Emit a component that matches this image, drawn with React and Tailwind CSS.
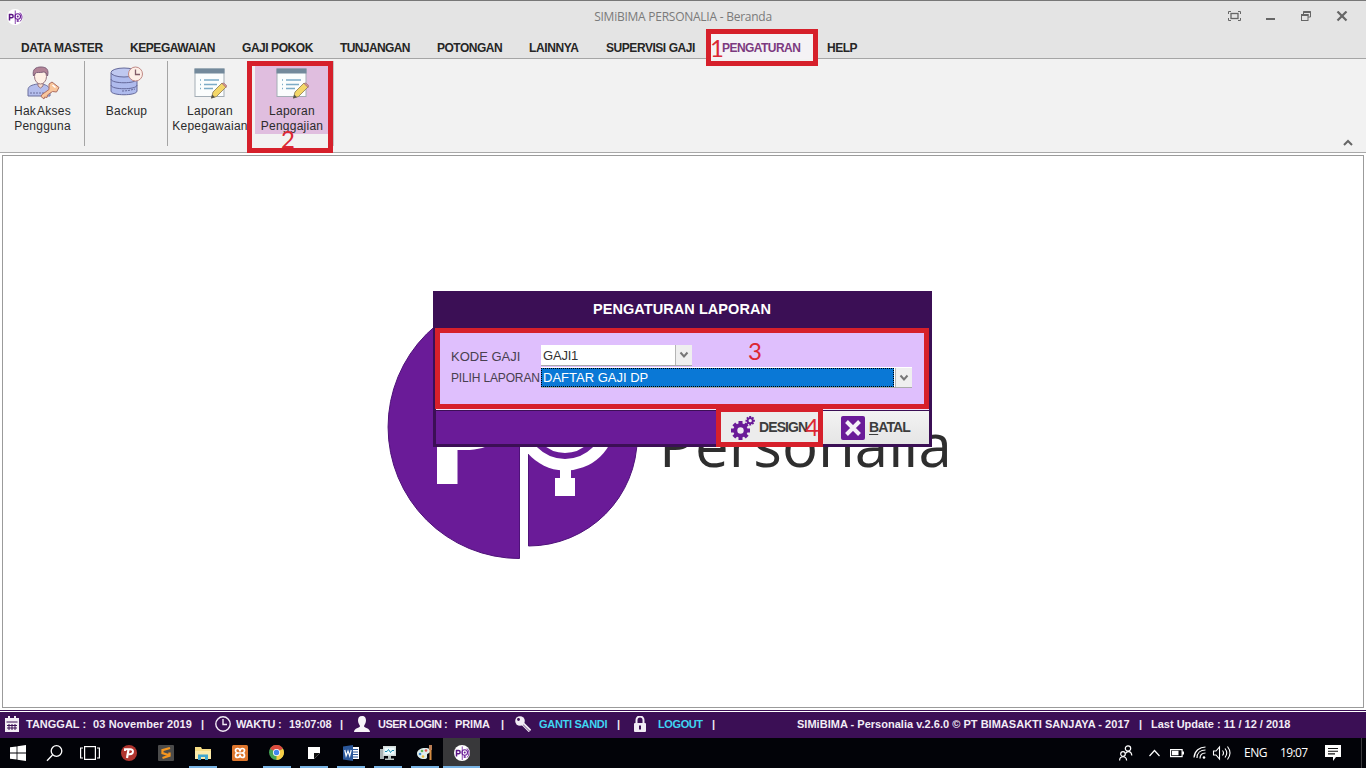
import React from "react";

const tabs = [
  { label: "DATA MASTER", cls: "w-[109px] tracking-[-0.3px]" },
  { label: "KEPEGAWAIAN", cls: "w-[112px] tracking-[-0.45px]" },
  { label: "GAJI POKOK", cls: "w-[98px] tracking-[-0.45px]" },
  { label: "TUNJANGAN", cls: "w-[97px] tracking-[-0.6px]" },
  { label: "POTONGAN", cls: "w-[92px] tracking-[-0.5px]" },
  { label: "LAINNYA", cls: "w-[77px] tracking-[-0.4px]" },
  { label: "SUPERVISI GAJI", cls: "w-[105px] tracking-[-0.45px]" },
];

function BrandMark({ className }) {
  return (
    <svg viewBox="0 0 32 32" className={className}>
      <circle cx="16" cy="16" r="16" fill="#fff" />
      <path d="M16.500 3v27" stroke="#6b1b98" strokeWidth="1.600" />
      <path d="M5 23V11h4a3 3 0 0 1 0 6.500H6" fill="none" stroke="#5b1585" strokeWidth="3" />
      <circle cx="21.500" cy="15" r="5.500" fill="none" stroke="#6b1b98" strokeWidth="2.200" />
      <circle cx="21.500" cy="15" r="2" fill="#6b1b98" />
      <path d="M21.500 20v6M19 24h5M26 7a12 12 0 0 1 0 18" fill="none" stroke="#6b1b98" strokeWidth="1.800" />
    </svg>
  );
}

function TitleBar() {
  return (
    <div className="flex h-[33px] items-center border-t border-[#777] pl-[7px] pr-[16px]">
      <BrandMark className="h-4 w-4" />
      <div className="flex-1 pl-[115px] text-center font-['Open_Sans',sans-serif] text-[12px] tracking-[-0.25px] text-[#7a7a7a]">
        SIMiBIMA PERSONALIA - Beranda
      </div>
      <svg viewBox="0 0 122 12" className="h-3 w-[122px]" fill="none" stroke="#666">
        <path d="M3 .500H.500V3M10 .500h2.500V3M3 9.500H.500V7M10 9.500h2.500V7" />
        <rect x="3" y="2.500" width="7" height="5" strokeWidth="1.300" />
        <path d="M38 8h9" strokeWidth="2" />
        <path d="M75.500 3V.500h7V6H80" />
        <path d="M75.500 1h7M73 4h7.500" strokeWidth="1.800" />
        <rect x="73.500" y="3.500" width="6.500" height="6" />
        <path d="M109.500 .500l9 9M118.500 .500l-9 9" strokeWidth="2.200" />
      </svg>
    </div>
  );
}

function TabRow() {
  return (
    <div className="flex h-[26px] border-b border-[#a5a5a5] pl-[21px] text-[12px] font-bold leading-[30px] text-[#262626]">
      {tabs.map((t) => (
        <div key={t.label} className={"shrink-0 whitespace-nowrap " + t.cls}>
          {t.label}
        </div>
      ))}
      <div className="-mr-px h-[26px] w-[103px] shrink-0 bg-[#f4f2f5] pl-[11px] tracking-[-0.55px] text-[#7c3a80]">PENGATURAN</div>
      <div className="pl-[14px] tracking-[-0.5px]">HELP</div>
    </div>
  );
}

function UserKeyIcon() {
  return (
    <svg viewBox="0 0 34 34" className="h-[34px] w-[34px]" strokeWidth="1">
      <path d="M2 30v-6c0-4 4-5 9-6h5c5 1 8 3 8 7v5z" fill="#b4bdec" stroke="#6b6f9c" />
      <path d="M4 27h14" stroke="#6b6f9c" strokeDasharray="2 1" />
      <path d="M12 16h5v4l-2.500 2L12 20z" fill="#f6dccb" stroke="#9a7680" />
      <ellipse cx="14.500" cy="10.500" rx="6" ry="7.500" fill="#fff0e5" stroke="#9a7680" />
      <path d="M7.500 10C6 3 10 1 15 1c6 0 8 3 6.500 9-1-3-2-4-4-4-4 1-7 0-8 1z" fill="#b28497" stroke="#80617a" />
      <g fill="#f9c69c" stroke="#ad6e62">
        <path d="M23 18l3-2 7 5.500-2.500 4.500-4-.500-5 3.500-.500 2.500-2.500-.500L18 33l-3-2.500 1-2 7-5z" />
        <path d="M26.500 19l3 2.500" stroke="#fff" strokeWidth="1.600" />
      </g>
    </svg>
  );
}

function BackupIcon() {
  return (
    <svg viewBox="0 0 34 34" className="h-[34px] w-[34px]" stroke="#65699a" strokeWidth="1">
      <path d="M1 7v18c0 5 26 5 26 0V7z" fill="#afbbed" />
      <path d="M1 13c0 5 26 5 26 0M1 19c0 5 26 5 26 0" fill="none" />
      <ellipse cx="14" cy="6.500" rx="13" ry="4.500" fill="#bfc8f0" />
      <path d="M12 25c5 0 9-1 13-2" fill="none" strokeDasharray="2 1" />
      <circle cx="25.500" cy="8" r="7" fill="#fdeee7" stroke="#c08a86" />
      <path d="M25.500 3.500V8.500H30" fill="none" stroke="#825c68" strokeWidth="1.300" />
    </svg>
  );
}

function ReportIcon() {
  return (
    <svg viewBox="0 0 34 34" className="h-[34px] w-[34px]">
      <rect x="2" y="3" width="29" height="27.500" fill="#fbfdfd" stroke="#a3adb5" />
      <rect x="1.500" y="2.500" width="30" height="5" fill="#73899b" />
      <path d="M7 14h1M7 18.500h1M7 22.500h1M11 14h15M11 18.500h13M11 22.500h9" stroke="#7cabc6" strokeWidth="1.300" />
      <path d="M18.500 32l1.500-6L29 17l4 4-9.500 9.500z" fill="#f4d768" stroke="#8a7852" strokeWidth=".8" />
      <path d="M29 17.500l4 4 .800-1.800-3-2.700z" fill="#d79793" stroke="#966767" strokeWidth=".6" />
      <path d="M18 32.500l1.200-4 2.800 2.800z" fill="#54534e" />
    </svg>
  );
}

function Ribbon() {
  return (
    <div className="flex h-[94px] border-b border-[#a9a9a9] bg-[#f2f2f2] pt-[2px] text-center text-[12px] leading-[15px] tracking-[0.25px] text-[#2b2b2b]">
      <div className="flex h-[85px] w-[85px] shrink-0 flex-col items-center border-r border-[#a5a5a5] pl-px pt-[5px]">
        <UserKeyIcon />
        <div className="mt-[4px] whitespace-nowrap"><span className="[word-spacing:-2px]">Hak Akses</span><br />Pengguna</div>
      </div>
      <div className="flex h-[85px] w-[83px] shrink-0 flex-col items-center border-r border-[#a5a5a5] pl-px pt-[5px]">
        <BackupIcon />
        <div className="mt-[4px]">Backup</div>
      </div>
      <div className="flex h-[85px] w-[83px] shrink-0 flex-col items-center pl-px pt-[5px]">
        <ReportIcon />
        <div className="mt-[4px] whitespace-nowrap">Laporan<br />Kepegawaian</div>
      </div>
      <div className="flex h-[85px] w-[83px] shrink-0 border-r border-[#c5c5c5] pl-[4px] pt-[5px]">
        <div className="flex h-[68px] w-[73px] flex-col items-center bg-[#e0bedf] pl-px">
          <ReportIcon />
          <div className="mt-[4px]">Laporan<br />Penggajian</div>
        </div>
      </div>
      <div className="flex flex-1 items-end justify-end pb-[6px] pr-[13px]">
        <svg viewBox="0 0 10 7" className="h-[7px] w-[10px]">
          <path d="M1 6l4-4 4 4" fill="none" stroke="#666" strokeWidth="2" />
        </svg>
      </div>
    </div>
  );
}

function HomeLogo() {
  return (
    <div className="flex pl-[384px] pt-[138px]">
      <svg viewBox="387 294 252 266" className="h-[266px] w-[252px] shrink-0">
        <g fill="#6a1b98" stroke="#4e1279">
          <path d="M519.500 295.500a131.500 131.500 0 0 0 0 263z" />
          <path d="M528.500 328.500a108.750 108.750 0 0 1 0 217.500z" />
        </g>
        <g fill="#fff">
          <path d="M437 400h50c24 14 24 50-22 50h-7.500v34H437z" />
          <path d="M528 387.500A50 50 0 1 1 528 453.600z" />
          <path d="M560 465h11v13h4v18h-20v-18h5z" />
        </g>
        <circle cx="565" cy="420" r="36" fill="none" stroke="#6a1b98" strokeWidth="6" />
      </svg>
      <div className="ml-[20px] mt-[110px] font-['Open_Sans',sans-serif] text-[60px] leading-[80px] text-[#2e2e2e]">
        Personalia
      </div>
    </div>
  );
}

function DropButton() {
  return (
    <div className="flex w-[17px] items-center justify-center border-l border-[#b5b5b5] bg-[#efefef]">
      <svg viewBox="0 0 10 8" className="h-2 w-[10px]">
        <path d="M1.500 1.500L5 5.500l3.500-4" fill="none" stroke="#777" strokeWidth="2" />
      </svg>
    </div>
  );
}

function Gear({ className }) {
  return (
    <svg viewBox="0 0 24 24" className={className}>
      <g stroke="#6a1b98">
        <path d="M9.500 5v19M0 14.500h19M2.800 7.800l13.400 13.400M16.200 7.800L2.800 21.200" strokeWidth="4" />
        <circle cx="9.500" cy="14.500" r="5.200" fill="none" strokeWidth="4" />
        <path d="M19.200 0v9.400M14.500 4.700h9.400M15.900 1.400l6.600 6.600M22.500 1.400l-6.600 6.600" strokeWidth="2" />
      </g>
      <circle cx="9.500" cy="14.500" r="3.200" fill="#f0eef2" />
      <circle cx="19.200" cy="4.700" r="2.500" fill="#f0eef2" stroke="#6a1b98" strokeWidth="1.700" />
    </svg>
  );
}

function Dialog() {
  return (
    <div className="absolute left-[433px] top-[291px] flex h-[156px] w-[499px] flex-col border-x-[3px] border-b-[3px] border-[#3b0f55] bg-[#3b0f55]">
      <div className="h-[37px] pr-[1px] text-center text-[14.500px] font-bold leading-[36px] tracking-[0.06px] text-white">PENGATURAN LAPORAN</div>
      <div className="flex h-[81px] flex-col bg-[#dfbffd] pl-[15px] pt-[17px] text-[13px] text-[#49404f]">
        <div className="flex h-[21px]">
          <div className="w-[90px] leading-[23px]">KODE GAJI</div>
          <div className="flex w-[151px] border-b border-[#aaa] bg-white">
            <div className="flex-1 pl-[2px] leading-[21px] tracking-[-0.2px] text-[#333]">GAJI1</div>
            <DropButton />
          </div>
        </div>
        <div className="mt-[1px] flex h-[21px]">
          <div className="w-[90px] whitespace-nowrap text-[12px] leading-[22px] tracking-[-0.15px]">PILIH LAPORAN</div>
          <div className="flex w-[371px] border-b border-[#aaa] bg-white pt-px">
            <div className="mr-px h-[19px] flex-1 border border-dotted border-black bg-[#0a78d6] pl-px leading-[17px] text-white">DAFTAR GAJI DP</div>
            <DropButton />
          </div>
        </div>
      </div>
      <div className="flex flex-1 border-t border-[#f0e4fa] bg-[#3b0f55] pt-px text-[14px] font-bold text-[#3d3d3d]">
        <div className="flex-1 bg-[#6a1b98]" />
        <div className="flex w-[103px] items-center bg-[#ececec] pl-[11px]">
          <Gear className="h-6 w-6" />
          <span className="ml-[4px] tracking-[-0.9px]">DESIGN</span>
        </div>
        <div className="flex w-[106px] items-center bg-linear-to-b from-[#f3f3f3] to-[#e5e5e5] pl-[18px]">
          <svg viewBox="0 0 24 24" className="h-6 w-6">
            <rect width="24" height="24" rx="2" fill="#6a1b98" />
            <path d="M5.500 5.500l13 13M18.500 5.500l-13 13" stroke="#f5f0f8" strokeWidth="4" />
          </svg>
          <span className="ml-[4px] tracking-[-0.9px]"><span className="underline underline-offset-2">B</span>ATAL</span>
        </div>
      </div>
    </div>
  );
}

function StatusBar() {
  return (
    <div className="flex h-[26px] items-center whitespace-nowrap bg-[#3b0f55] pb-[2px] pl-[4px] text-[11px] font-bold text-[#f2ecf5]">
      <svg viewBox="0 0 16 16" className="h-4 w-4">
        <path d="M1 2h14v14H1zM4 0h2v4H4zM10 0h2v4h-2z" fill="#f2ecf5" />
        <path d="M2.500 6h11M5 8v6M8 8v6M11 8v6M3 9.500h10M3 12h10" stroke="#3b0f55" />
      </svg>
      <span className="ml-[6px] w-[67px] tracking-[0px]">TANGGAL :</span>
      <span className="w-[108px] tracking-[0.15px]">03 November 2019</span>
      <span className="w-[14px]">|</span>
      <svg viewBox="0 0 16 16" className="h-4 w-4" fill="none" stroke="#f2ecf5" strokeWidth="1.400">
        <circle cx="8" cy="8" r="7.200" />
        <path d="M8 3v5.500h4" />
      </svg>
      <span className="ml-[5px] w-[53px] tracking-[-0.25px]">WAKTU :</span>
      <span className="w-[51px] tracking-[-0.2px]">19:07:08</span>
      <span className="w-[14px]">|</span>
      <svg viewBox="0 0 16 16" className="h-4 w-4" fill="#f7f3f9">
        <path d="M8 0c3 0 4 2 4 4.500S10.500 9 10 10c0 2 6 2 6 6H0c0-4 6-4 6-6-.500-1-2-3-2-5.500S5 0 8 0z" />
      </svg>
      <span className="ml-[8px] w-[77px] tracking-[-0.5px]">USER LOGIN :</span>
      <span className="w-[46px] tracking-[-0.1px]">PRIMA</span>
      <span className="w-[14px]">|</span>
      <svg viewBox="0 0 16 16" className="h-4 w-4">
        <path d="M5 5l10 10" stroke="#f2ecf5" strokeWidth="3.400" />
        <path d="M7 7.500l8 8" stroke="#3b0f55" strokeWidth=".7" />
        <circle cx="5" cy="5" r="4.800" fill="#f2ecf5" />
        <circle cx="3.500" cy="3.500" r="1.400" fill="#3b0f55" />
      </svg>
      <span className="ml-[8px] w-[78px] tracking-[-0.3px] text-[#3fd5f2]">GANTI SANDI</span>
      <span className="w-[16px]">|</span>
      <svg viewBox="0 0 14 16" className="h-4 w-[14px]">
        <path d="M3.500 8V4a3.500 3.500 0 0 1 7 0v4" fill="none" stroke="#f2ecf5" strokeWidth="2" />
        <rect x="1" y="7" width="12" height="9" rx="1" fill="#f2ecf5" />
        <path d="M7 9.500v4" stroke="#3b0f55" strokeWidth="2" />
      </svg>
      <span className="ml-[11px] w-[54px] tracking-[-0.4px] text-[#3fd5f2]">LOGOUT</span>
      <span>|</span>
      <span className="ml-auto w-[342px] tracking-[0.02px]">SIMiBIMA - Personalia v.2.6.0 © PT BIMASAKTI SANJAYA - 2017</span>
      <span className="w-[12px]">|</span>
      <span className="w-[215px]">Last Update : 11 / 12 / 2018</span>
    </div>
  );
}

function TaskCell({ line = "", active, children }) {
  return (
    <div className={"flex h-[30px] w-[37px] shrink-0 flex-col items-center " + (active ? "bg-[#38383a]" : "")}>
      <div className="flex h-[28px] items-center pt-px">{children}</div>
      <div className={"h-[2px] " + line} />
    </div>
  );
}

function Taskbar() {
  const on = "w-[28px] bg-[#78b3e4]";
  return (
    <div className="flex h-[30px] bg-[#020308] text-white">
      <div className="flex w-[36px] items-center justify-center">
        <svg viewBox="0 0 16 16" className="h-4 w-4" fill="#fff">
          <path d="M0 2.300L6.600 1.400v6.200H0zM7.400 1.300L16 0v7.600H7.400zM0 8.400h6.600v6.200L0 13.700zM7.400 8.400H16V16l-8.600-1.300z" />
        </svg>
      </div>
      <div className="flex w-[36px] items-center justify-center">
        <svg viewBox="0 0 17 17" className="h-[17px] w-[17px]" fill="none" stroke="#fff" strokeWidth="1.300">
          <circle cx="10.500" cy="6" r="5.300" />
          <path d="M6.500 10L1 15.800" />
        </svg>
      </div>
      <div className="flex w-[38px] items-center justify-center pr-[2px]">
        <svg viewBox="0 0 20 14" className="h-[14px] w-5" fill="none" stroke="#fff" strokeWidth="1.200">
          <rect x="4.600" y=".6" width="10.800" height="12.800" />
          <path d="M3 2H.600v10H3M17 2h2.400v10H17" />
        </svg>
      </div>
      <TaskCell>
        <svg viewBox="0 0 16 16" className="h-4 w-4">
          <circle cx="8" cy="8" r="8" fill="#b1352f" />
          <path d="M4 6V4.200h5.200c4 0 3.600 5-.400 5H7.200" fill="none" stroke="#fff" strokeWidth="1.900" />
          <path d="M7.600 4L6 13" stroke="#fff" strokeWidth="2.200" />
        </svg>
      </TaskCell>
      <TaskCell>
        <svg viewBox="0 0 16 16" className="h-4 w-4">
          <rect width="16" height="16" rx="1" fill="#4b4b4b" />
          <path d="M12 3L4.500 5.200v3L12 10.500M11.500 7.500v3.200L4.500 13" fill="none" stroke="#f5961f" strokeWidth="2.300" />
        </svg>
      </TaskCell>
      <TaskCell line={on}>
        <svg viewBox="0 0 16 14" className="h-[14px] w-4">
          <path d="M0 1h6l1 2h9v10H0z" fill="#f5dc85" />
          <path d="M0 5h16v8H0z" fill="#fbeaa9" />
          <path d="M3 14V8.500h10V14h-3v-3H6v3z" fill="#3fa6cf" />
        </svg>
      </TaskCell>
      <TaskCell>
        <svg viewBox="0 0 16 16" className="h-4 w-4">
          <rect width="16" height="16" rx="1.500" fill="#de762c" />
          <path d="M8 6.500c0-2-1-3-2.300-3S3.500 4.500 3.500 5.500 4.500 8 6 8h4c1.500 0 2.500 1 2.500 2.500s-1 2-2.200 2S8 11.500 8 9.500M8 6.500c0-2 1-3 2.300-3s2.200 1 2.200 2S11.500 8 10 8M6 8c-1.500 0-2.500 1-2.500 2.500s1 2 2.200 2S8 11.500 8 9.500" fill="none" stroke="#fff" strokeWidth="1.700" />
        </svg>
      </TaskCell>
      <TaskCell line={on}>
        <svg viewBox="0 0 16 16" className="h-[15px] w-[15px]">
          <circle cx="8" cy="8" r="8" fill="#46a355" />
          <path d="M8 8L1.100 4A8 8 0 0 1 15 4z" fill="#dc4b3e" />
          <path d="M8 8l6.900-4A8 8 0 0 1 8 16z" fill="#f8ce46" />
          <circle cx="8" cy="8" r="3.800" fill="#fff" />
          <circle cx="8" cy="8" r="2.900" fill="#4286ee" />
        </svg>
      </TaskCell>
      <TaskCell line={on}>
        <svg viewBox="0 0 12 12" className="h-3 w-3">
          <path d="M0 0h12v6l-6 6H0z" fill="#fff" />
          <path d="M6 12V6h6z" fill="#111" />
        </svg>
      </TaskCell>
      <TaskCell line={on}>
        <svg viewBox="0 0 16 16" className="h-4 w-4">
          <rect x="8" y="2" width="8" height="12" fill="#fff" />
          <path d="M9 4.500h6M9 7h6M9 9.500h6M9 12h6" stroke="#2b579a" />
          <path d="M0 1.500L10 0v16L0 14.500z" fill="#2b579a" />
          <path d="M1.800 5l1.300 6L5 6l1.700 5L8.200 5" fill="none" stroke="#fff" strokeWidth="1.200" />
        </svg>
      </TaskCell>
      <TaskCell line={on}>
        <svg viewBox="0 0 16 16" className="h-4 w-4">
          <rect x="0" y="4" width="4" height="10" fill="#a9b2b3" />
          <rect x="3" y="1" width="13" height="10" fill="#d3dcda" />
          <rect x="4.500" y="2.500" width="10" height="7" fill="#eefcff" />
          <path d="M5 6.500h2l1.500-2 2 3 1.500-2h2" fill="none" stroke="#1e8fb0" />
          <path d="M8 11h3v2.500h3V15H5v-1.500h3z" fill="#b9c3c0" />
        </svg>
      </TaskCell>
      <TaskCell line={on}>
        <svg viewBox="0 0 16 16" className="h-4 w-4">
          <path d="M8 3c5 0 6 2 5 4s-3 1-3 3 1 4-3 4-7-2-7-5.500S4 3 8 3z" fill="#dcebea" />
          <circle cx="5" cy="6" r="1.300" fill="#5fb153" />
          <circle cx="9" cy="5.500" r="1.300" fill="#e0554d" />
          <circle cx="3" cy="9" r="1.300" fill="#3f8bd4" />
          <circle cx="6" cy="11.500" r="1.300" fill="#e7b93c" />
          <path d="M13.500 5v10" stroke="#d58c41" strokeWidth="2" />
          <path d="M12 0h3v5h-3z" fill="#b97d54" />
        </svg>
      </TaskCell>
      <TaskCell active line="w-[37px] bg-[#78b3e4]">
        <BrandMark className="h-4 w-4" />
      </TaskCell>
      <div className="ml-auto flex items-center font-['Open_Sans',sans-serif] text-[12px]">
        <svg viewBox="0 0 104 18" className="h-[18px] w-[104px]" fill="none" stroke="#fff" strokeWidth="1.200">
          <circle cx="9" cy="4.500" r="2.700" />
          <path d="M6.500 9.500C8 6.500 12.500 7 12.800 11.500" />
          <circle cx="4" cy="10" r="2.300" />
          <path d="M.600 16.500c0-5 7-5 7 0" />
          <path d="M30.500 12l5-5.500 5 5.500" />
          <rect x="51.600" y="5.600" width="11.500" height="7" />
          <path d="M64 7.500v3" strokeWidth="2" />
          <path d="M53 9h6.500" strokeWidth="4.500" />
          <path d="M75 13.500C75.500 7 80.500 3 86.500 3M78 14c0-5 3.500-8 8.500-8M81 14.500c0-3.500 2-5.500 5.500-5.500" />
          <circle cx="85" cy="13.500" r="1.300" fill="#fff" stroke="none" />
          <path d="M94.500 7H97l3.500-4v12L97 11h-2.500z" strokeWidth="1.100" />
        </svg>
        <svg viewBox="0 0 10 18" className="-ml-px h-[18px] w-[10px]" fill="none" stroke="#fff" strokeWidth="1.100">
          <path d="M.500 6.500q2 2.500 0 5M3 4.500q3.500 4.500 0 9M5.500 2.500q5 6.500 0 13" />
        </svg>
        <span className="ml-[12px] w-[36px] tracking-[-0.5px]">ENG</span>
        <span className="w-[45px] tracking-[-0.6px]">19:07</span>
        <svg viewBox="0 0 16 16" className="h-4 w-4">
          <path d="M0 0h16v12h-5l-3 4v-4H0z" fill="#fff" />
          <path d="M3 3.500h10M3 6.200h10M3 8.900h7" stroke="#111" strokeWidth="1.100" />
        </svg>
        <div className="ml-[20px] mr-[4px] h-[30px] w-px bg-[#3a3a3d]" />
      </div>
    </div>
  );
}

function Callouts() {
  return (
    <div className="font-['Lato',sans-serif] text-[24px] leading-[24px] text-[#dc2733]">
      <div className="absolute left-[706px] top-[29px] h-[37px] w-[112px] border-[5px] border-[#d6202b]" />
      <span className="absolute left-[710px] top-[36px]">1</span>
      <div className="absolute left-[247px] top-[61px] h-[92px] w-[86px] border-[5px] border-[#d6202b]" />
      <span className="absolute left-[281px] top-[127px]">2</span>
      <div className="absolute left-[435px] top-[328px] h-[81px] w-[494px] border-[5px] border-[#d6202b]" />
      <span className="absolute left-[748px] top-[339px]">3</span>
      <div className="absolute left-[716px] top-[407px] h-[40px] w-[107px] border-[5px] border-[#d6202b]" />
      <span className="absolute left-[805px] top-[415px]">4</span>
    </div>
  );
}

export default function App() {
  return (
    <div className="relative flex h-[768px] w-[1366px] flex-col overflow-hidden bg-[#e4e4e4] font-['Liberation_Sans',Arial,sans-serif]">
      <TitleBar />
      <TabRow />
      <Ribbon />
      <div className="flex h-[557px] flex-col bg-white px-[2px] pt-[2px]">
        <div className="h-[553px] w-[1362px] border border-[#9b9b9b] bg-white">
          <HomeLogo />
        </div>
      </div>
      <div className="h-px bg-[#3b0f55]" />
      <div className="h-px bg-white" />
      <StatusBar />
      <Taskbar />
      <Dialog />
      <Callouts />
    </div>
  );
}
